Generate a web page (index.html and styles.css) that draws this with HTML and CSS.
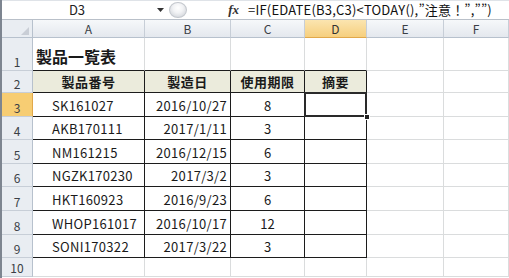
FILE: index.html
```html
<!DOCTYPE html>
<html lang="ja">
<head>
<meta charset="utf-8">
<link rel="stylesheet" href="styles.css">
</head>
<body>
<div class="app">
  <div class="fbar">
    <div class="namebox">D3</div>
    <div class="nb-arrow"><svg width="7" height="4" viewBox="0 0 7 4"><path d="M0 0h7L3.5 4z" fill="#333"/></svg></div>
    <div class="split"></div>
    <div class="fx">fx</div>
    <div class="formula">=IF(EDATE(B3,C3)&lt;TODAY(),”注意！”,””)</div>
  </div>
  <div class="grid">
    <div class="corner"><svg width="8" height="8" viewBox="0 0 8 8"><path d="M8 0V8H0z" fill="#c9ced6"/></svg></div>
    <div class="ch">A</div><div class="ch">B</div><div class="ch">C</div><div class="ch sel">D</div><div class="ch">E</div><div class="ch">F</div>

    <div class="rh">1</div>
    <div class="c tt title">製品一覧表</div><div class="c tt"></div><div class="c tt"></div><div class="c tt"></div><div class="c"></div><div class="c"></div>

    <div class="rh">2</div>
    <div class="c t hd">製品番号</div><div class="c t hd">製造日</div><div class="c t hd">使用期限</div><div class="c t hd">摘要</div><div class="c"></div><div class="c"></div>

    <div class="rh rsel">3</div>
    <div class="c t l">SK161027</div><div class="c t r">2016/10/27</div><div class="c t m">8</div><div class="c t active"><span class="handle"></span></div><div class="c"></div><div class="c"></div>

    <div class="rh">4</div>
    <div class="c t l">AKB170111</div><div class="c t r">2017/1/11</div><div class="c t m">3</div><div class="c t"></div><div class="c"></div><div class="c"></div>

    <div class="rh">5</div>
    <div class="c t l">NM161215</div><div class="c t r">2016/12/15</div><div class="c t m">6</div><div class="c t"></div><div class="c"></div><div class="c"></div>

    <div class="rh">6</div>
    <div class="c t l">NGZK170230</div><div class="c t r">2017/3/2</div><div class="c t m">3</div><div class="c t"></div><div class="c"></div><div class="c"></div>

    <div class="rh">7</div>
    <div class="c t l">HKT160923</div><div class="c t r">2016/9/23</div><div class="c t m">6</div><div class="c t"></div><div class="c"></div><div class="c"></div>

    <div class="rh">8</div>
    <div class="c t l">WHOP161017</div><div class="c t r">2016/10/17</div><div class="c t m">12</div><div class="c t"></div><div class="c"></div><div class="c"></div>

    <div class="rh">9</div>
    <div class="c t l">SONI170322</div><div class="c t r">2017/3/22</div><div class="c t m">3</div><div class="c t"></div><div class="c"></div><div class="c"></div>

    <div class="rh">10</div>
    <div class="c"></div><div class="c"></div><div class="c"></div><div class="c"></div><div class="c"></div><div class="c"></div>
  </div>
</div>
</body>
</html>
```
FILE: styles.css
```css
* { box-sizing: border-box; margin: 0; padding: 0; }
html, body { width: 509px; height: 278px; overflow: hidden; background: #fff; }
body { font-family: "Noto Sans CJK JP", "DejaVu Sans", sans-serif; color: #111; }
.app { width: 509px; height: 278px; border-left: 2px solid #7d8590; background: #fff; }

.fbar { height: 20px; display: flex; align-items: center; border-bottom: 1px solid #b9c0c9; border-top: 1px solid #dfe3e8; background: #fff; }
.namebox { width: 150px; text-align: center; font-size: 13px; line-height: 18px; color: #222; }
.nb-arrow { width: 16px; display: flex; justify-content: center; align-items: center; }
.split { width: 18px; height: 16px; border-radius: 50%; background: radial-gradient(circle at 50% 35%, #fff 0, #f2f3f5 40%, #c8ccd2 100%); border: 1px solid #c3c7cd; margin-left: 1px; }
.fx { width: 56px; text-align: right; padding-right: 4px; font-family: "Liberation Serif", serif; font-style: italic; font-weight: bold; font-size: 13px; color: #333; }
.formula { flex: 1; font-size: 13px; line-height: 18px; white-space: nowrap; color: #111; letter-spacing: 0.2px; padding-left: 5px; }

.grid { display: grid; grid-template-columns: 31px 112px 86px 74px 62px 77px 65px; grid-template-rows: 18px 33px 22px 24px 23px 24px 23px 24px 24px 23px 19px; }
.corner { background: #e9edf2; border-right: 1px solid #b7c1cd; border-bottom: 1px solid #b7c1cd; display: flex; align-items: flex-end; justify-content: flex-end; padding: 0 3px 2px 0; }
.ch { background: linear-gradient(#f6f8fa, #e4e8ee); border-right: 1px solid #c7ced7; border-bottom: 1px solid #b7c1cd; font-size: 12px; color: #3a3f46; text-align: center; line-height: 17px; }
.ch.sel { background: linear-gradient(#fbe5b0, #f6cf7e); border-bottom-color: #e1a84a; color: #333; }
.rh { background: #e9edf2; border-right: 1px solid #b7c1cd; border-bottom: 1px solid #c7ced7; font-size: 12px; color: #3a3f46; display: flex; align-items: flex-end; justify-content: center; padding-bottom: 1px; line-height: 14px; }
.rh.rsel { background: #f7cd73; border-right-color: #e1a84a; }

.c { border-right: 1px solid #dadcdd; border-bottom: 1px solid #dadcdd; font-size: 13px; display: flex; align-items: flex-end; padding-bottom: 2px; line-height: 16px; white-space: nowrap; color: #1a1a1a; }
.tt { border-bottom-color: #1c1c1c; }
.t { border-right-color: #1c1c1c; border-bottom-color: #1c1c1c; }
.title { font-size: 16px; font-weight: bold; padding-left: 3px; padding-bottom: 4px; line-height: 20px; }
.hd { background: #ebebdc; font-weight: bold; justify-content: center; letter-spacing: 0.5px; }
.l { padding-left: 19px; letter-spacing: 0.3px; }
.r { justify-content: flex-end; padding-right: 3px; letter-spacing: 0.3px; }
.m { justify-content: center; }
.active { position: relative; }
.active::after { content: ""; position: absolute; left: -1px; top: -1px; right: -1px; bottom: -1px; border: 2px solid #2a2a2a; box-shadow: inset 0 0 0 1px #fff; }
.handle { position: absolute; right: -4px; bottom: -4px; width: 6px; height: 6px; background: #222; border: 1px solid #fff; z-index: 2; }
```
